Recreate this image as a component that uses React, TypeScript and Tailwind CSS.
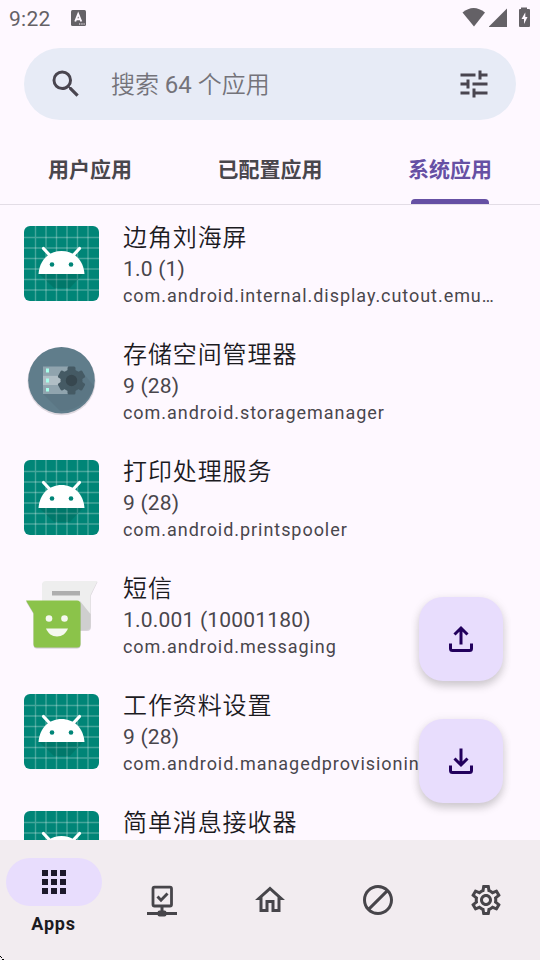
/**
 * AppsPage — installed app library with search, category tabs, import/export actions and bottom navigation.
 */

import type { ReactNode } from 'react';
import {
  MdSearch, MdTune, MdApps, MdOutlineHome, MdDoNotDisturb, MdOutlineSettings,
} from 'react-icons/md';
import clsx from 'clsx';

type IconKind = 'android' | 'storage' | 'messaging';

interface AppEntry {
  name: string;
  version?: string;
  pkg?: string;
  icon: IconKind;
}

const APPS: AppEntry[] = [
  { name: '边角刘海屏', version: '1.0 (1)', pkg: 'com.android.internal.display.cutout.emu…', icon: 'android' },
  { name: '存储空间管理器', version: '9 (28)', pkg: 'com.android.storagemanager', icon: 'storage' },
  { name: '打印处理服务', version: '9 (28)', pkg: 'com.android.printspooler', icon: 'android' },
  { name: '短信', version: '1.0.001 (10001180)', pkg: 'com.android.messaging', icon: 'messaging' },
  { name: '工作资料设置', version: '9 (28)', pkg: 'com.android.managedprovisioning', icon: 'android' },
  { name: '简单消息接收器', icon: 'android' },
];

const TABS = ['用户应用', '已配置应用', '系统应用'];
const ACTIVE_TAB = 2;

// ── App icons ─────────────────────────────────────────────────────
const GRID_LINES = [11.5, 22, 32.5, 43, 53.5, 64];

function AndroidIcon() {
  return (
    <svg viewBox="0 0 75 75" className="size-[75px]">
      <rect width="75" height="75" rx="6" fill="#008577" />
      <g stroke="#fff" strokeOpacity=".27" strokeWidth="1.4">
        {GRID_LINES.map((p) => <path key={p} d={`M${p} 0V75M0 ${p}H75`} />)}
      </g>
      <path d="M15 48 30 62H46L59 48Z" fill="#004d40" opacity=".22" />
      <path d="M19.5 22.500 27 30.500M55.500 22.500 48 30.500" stroke="#fff" strokeWidth="3.200" strokeLinecap="round" />
      <path d="M14.500 48C15.500 34 25 25 37.500 25S59.500 34 60.500 48Z" fill="#fff" />
      <circle cx="28" cy="38.500" r="2.300" fill="#008577" />
      <circle cx="47" cy="38.500" r="2.300" fill="#008577" />
    </svg>
  );
}

function StorageIcon() {
  return (
    <svg viewBox="0 0 75 75" className="size-[75px]">
      <circle cx="37.500" cy="38.300" r="34" fill="#000" opacity=".12" />
      <circle cx="37.500" cy="37.200" r="33.300" fill="#607d8b" />
      <path d="M19 51 36 68C52 68 66 58 70 43L60 31 45 51Z" fill="#455a64" opacity=".16" />
      <path d="M19 23.500H44V32.500H19Z" fill="#90a4ae" />
      <path d="M19 32.500H44V42H19Z" fill="#b0bec5" />
      <path d="M19 42H44V51H19Z" fill="#90a4ae" />
      <path d="M22 25.500h3v4h-3zM22 35.500h3v4h-3zM22 45h3v3.500h-3z" fill="#a7ffeb" />
      <g fill="#455a64">
        <circle cx="47.500" cy="37.500" r="11" />
        <rect x="43.500" y="23.500" width="8" height="28" rx="1.500" />
        <rect x="43.500" y="23.500" width="8" height="28" rx="1.500" transform="rotate(60 47.500 37.500)" />
        <rect x="43.500" y="23.500" width="8" height="28" rx="1.500" transform="rotate(120 47.500 37.500)" />
      </g>
      <circle cx="47.500" cy="37.500" r="5.700" fill="#37474f" />
    </svg>
  );
}

function MessagingIcon() {
  return (
    <svg viewBox="0 0 75 75" className="size-[75px]">
      <path d="M22 5H73.500L67 18.500V50Q67 54 63 54H22Q18 54 18 50V9Q18 5 22 5Z" fill="#000" opacity=".14" />
      <path d="M22 4H73.500L66.500 18V49Q66.500 53 62.500 53H22Q18 53 18 49V8Q18 4 22 4Z" fill="#eeeeee" />
      <path d="M56 24 66.500 37V49Q66.500 53 62.500 53H56Z" fill="#000" opacity=".13" />
      <path d="M28 14H56V18.500H28Z" fill="#aeaeae" />
      <path d="M2 24.500H53Q56.500 24.500 56.500 28V68Q56.500 71.500 53 71.500H13Q9.500 71.500 9.500 68V37Z" fill="#000" opacity=".2" />
      <path d="M2 23.500H53Q56.500 23.500 56.500 27V67Q56.500 70.500 53 70.500H13Q9.500 70.500 9.500 67V36Z" fill="#8bc34a" />
      <circle cx="25" cy="41.500" r="3.300" fill="#f5f8f0" />
      <circle cx="40.500" cy="41.500" r="3.300" fill="#f5f8f0" />
      <path d="M22 51.500H44C42 56.500 38 59.500 33 59.500S24 56.500 22 51.500Z" fill="#f5f8f0" />
    </svg>
  );
}

function AppIcon({ kind }: { kind: IconKind }) {
  if (kind === 'storage') return <StorageIcon />;
  if (kind === 'messaging') return <MessagingIcon />;
  return <AndroidIcon />;
}

// ── Status bar ────────────────────────────────────────────────────
function StatusBar() {
  return (
    <div className="flex h-9 items-center justify-between px-[9px] text-[#646166]">
      <div className="flex items-center">
        <span className="w-[62px] pt-px text-[21px] leading-9 tracking-[0.3px]">9:22</span>
        <svg viewBox="0 0 15 16" className="h-4 w-[15px]">
          <rect width="15" height="16" rx="1.500" fill="currentColor" />
          <path d="M4.200 11.500 7.200 4 10.300 11.500M5.200 9.300H9.200" fill="none" stroke="#fef8ff" strokeWidth="1.900" />
          <path d="M8 13.500h1.300v1H8zM10.300 13.500h1.300v1h-1.300zM12.500 13.500h1.200v1h-1.200z" fill="#fef8ff" />
        </svg>
      </div>
      <svg viewBox="0 0 70 22" className="h-[22px] w-[70px]" fill="currentColor">
        <path d="M1.500 5.500Q12.500-3.500 24 5.500L13 19.500Z" />
        <path d="M28 19.500 46 1.500V20H28Z" />
        <path d="M60 2V0.500H66V2H68Q69 2 69 3V19Q69 20 68 20H59Q58 20 58 19V3Q58 2 59 2Z" />
        <path d="M64.500 5 60.500 12H63V17L66.500 10H64.300V5Z" fill="#fef8ff" />
      </svg>
    </div>
  );
}

// ── List row ──────────────────────────────────────────────────────
function AppRow({ app }: { app: AppEntry }) {
  return (
    <div className="flex h-[117px] shrink-0 items-start gap-6 pl-6 pr-9 pt-[21px]">
      <div className="shrink-0"><AppIcon kind={app.icon} /></div>
      <div className="-mt-1.5 min-w-0 flex-1 whitespace-nowrap">
        <p className="text-2xl font-[350] leading-9 tracking-[0.9px] text-[#1c1b1f]">{app.name}</p>
        {app.version && (
          <p className="text-[21px] leading-[27px] tracking-[0.2px] text-[#49464c]">{app.version}</p>
        )}
        {app.pkg && (
          <p className="text-lg leading-[25px] tracking-[0.95px] text-[#49464c]">{app.pkg}</p>
        )}
      </div>
    </div>
  );
}

function Fab({ label, arrow }: { label: string; arrow: string }) {
  return (
    <button
      aria-label={label}
      className="flex size-[84px] items-center justify-center rounded-3xl bg-[#e8ddfd] pt-0.5 text-[#22005d]
                 shadow-[0_5px_8px_rgba(0,0,0,0.17),0_1px_12px_rgba(0,0,0,0.06)]"
    >
      <svg viewBox="0 0 36 36" className="size-9" fill="none" stroke="currentColor" strokeWidth="3">
        <path d="M7.500 21.500V26.500Q7.500 28.500 9.500 28.500H26.500Q28.500 28.500 28.500 26.500V21.500" />
        <path d={arrow} />
      </svg>
    </button>
  );
}

// ── Bottom navigation ─────────────────────────────────────────────
function NetworkCheckIcon() {
  return (
    <svg viewBox="0 0 36 36" className="size-9" fill="none" stroke="currentColor">
      <rect x="9" y="5.200" width="18.500" height="18.800" rx="1.500" strokeWidth="2.800" />
      <path d="M13.500 14.500 17 18.200 23.500 11.500" strokeWidth="2.900" />
      <path d="M18 24V29" strokeWidth="3" />
      <path d="M3 31.500H33" strokeWidth="3" />
      <rect x="13.500" y="28.500" width="9" height="6" rx="2" fill="currentColor" stroke="none" />
    </svg>
  );
}

function NavItem({ label, children }: { label: string; children: ReactNode }) {
  return (
    <button aria-label={label} className="flex flex-1 items-center justify-center text-[#47454a]">
      {children}
    </button>
  );
}

export default function App() {
  return (
    <div className="relative flex h-[960px] w-[540px] flex-col overflow-hidden bg-[#fef8ff] font-[Roboto,'Noto_Sans_CJK_SC',sans-serif]">
      <StatusBar />

      {/* Search */}
      <div className="mx-6 mt-3 flex h-[72px] shrink-0 items-center rounded-full bg-[#e7ebf6] px-6 text-[#49454f]">
        <MdSearch className="size-9" />
        <span className="ml-[27px] flex-1 pt-0.5 text-2xl font-[350] text-[#74737a]">
          搜索 <span className="font-normal">64</span> 个应用
        </span>
        <MdTune className="size-9" />
      </div>

      {/* Tabs */}
      <div className="mt-3 flex h-[73px] shrink-0 border-b border-[#e3dde6]">
        {TABS.map((tab, i) => (
          <button
            key={tab}
            className={clsx(
              'relative flex flex-1 items-center justify-center pt-1.5 text-[21px] font-bold',
              i === ACTIVE_TAB ? 'text-[#6650a4]' : 'text-[#49464c]'
            )}
          >
            {tab}
            {i === ACTIVE_TAB && (
              <span className="absolute bottom-0 h-[5px] w-[78px] rounded-t-[4px] bg-[#6650a4]" />
            )}
          </button>
        ))}
      </div>

      {/* App list */}
      <div className="relative flex min-h-0 flex-1 flex-col overflow-hidden">
        {APPS.map((app) => <AppRow key={app.name} app={app} />)}
        <div className="absolute bottom-[37px] right-[37px] flex flex-col gap-[38px]">
          <Fab label="Export" arrow="M18 22.500V6.500M11.500 12.500 18 6 24.500 12.500" />
          <Fab label="Import" arrow="M18 4.500V20.500M11.500 14.500 18 21 24.500 14.500" />
        </div>
      </div>

      {/* Bottom navigation */}
      <nav className="relative flex h-[120px] shrink-0 bg-[#f2ecf0]">
        <button className="flex flex-1 flex-col items-center pt-[18px] text-[#1c1b1f]">
          <span className="flex h-12 w-24 items-center justify-center rounded-full bg-[#e8ddfd] text-[#1d192b]">
            <MdApps className="size-9" />
          </span>
          <span className="mr-px mt-1.5 text-lg font-bold leading-6 tracking-[0.75px]">Apps</span>
        </button>
        <NavItem label="Configured"><NetworkCheckIcon /></NavItem>
        <NavItem label="Home"><MdOutlineHome className="size-9" /></NavItem>
        <NavItem label="Blocked"><MdDoNotDisturb className="size-9 -scale-x-100" /></NavItem>
        <NavItem label="Settings"><MdOutlineSettings className="size-9" /></NavItem>
        <svg viewBox="0 0 4 4" className="absolute bottom-0 left-0 size-1" fill="#000">
          <path d="M0 0h1v1H0zM1 1h1v1H1zM2 3h2v1H2z" />
        </svg>
      </nav>
    </div>
  );
}
